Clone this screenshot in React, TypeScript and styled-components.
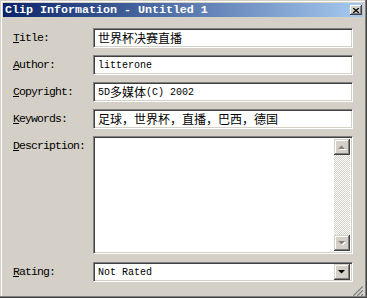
import React from 'react';
import styled, { createGlobalStyle } from 'styled-components';

const GlobalStyle = createGlobalStyle`
  html, body {
    margin: 0;
    padding: 0;
    background: #d4d0c8;
  }
`;

const MONO = `"Liberation Mono", "DejaVu Sans Mono", monospace`;
const CJK = `"Noto Sans CJK SC", "Liberation Sans", sans-serif`;

const Window = styled.div`
  width: 367px;
  height: 298px;
  box-sizing: border-box;
  padding: 3px 4px 2px 3px;
  background: #d4d0c8;
  display: flex;
  flex-direction: column;
  box-shadow: inset -1px -1px #404040, inset -2px -2px #808080, inset 1px 1px #d4d0c8, inset 2px 2px #ffffff;
`;

const TitleBar = styled.div`
  height: 14px;
  display: flex;
  align-items: center;
  justify-content: space-between;
  padding: 0 1px 0 2px;
  background: linear-gradient(90deg, #0a246a 0%, #a6caf0 100%);
`;

const TitleText = styled.span`
  font-family: ${MONO};
  font-weight: bold;
  font-size: 11.67px;
  color: #ffffff;
  white-space: pre;
  line-height: 14px;
`;

const CloseButton = styled.div`
  width: 12px;
  height: 10px;
  box-sizing: border-box;
  background: #d4d0c8;
  box-shadow: inset -1px -1px #404040, inset 1px 1px #ffffff, inset -2px -2px #808080;
  display: flex;
  align-items: center;
  justify-content: center;
`;

const Form = styled.div`
  display: grid;
  grid-template-columns: 80px 260px;
  row-gap: 7px;
  margin: 11px 0 0 10px;
`;

const Label = styled.div`
  font-family: ${MONO};
  font-size: 11.5px;
  letter-spacing: -0.9px;
  color: #000;
  line-height: 20px;
  white-space: pre;
`;

const Key = styled.span`
  text-decoration: underline;
  text-underline-offset: 1px;
`;

const sunken = `
  box-sizing: border-box;
  border-top: 1px solid #808080;
  border-left: 1px solid #808080;
  border-bottom: 1px solid #ffffff;
  border-right: 1px solid #ffffff;
  box-shadow: inset 1px 1px #404040, inset -1px -1px #d4d0c8;
  background: #ffffff;
`;

const Field = styled.div<{ $h?: number }>`
  ${sunken}
  height: ${p => p.$h ?? 20}px;
  display: flex;
  align-items: center;
  padding: 0 2px 0 4px;
  font-family: ${MONO};
  font-size: 10px;
  color: #000;
  white-space: pre;
  overflow: hidden;
`;

const Cjk = styled.span`
  font-family: ${CJK};
  font-size: 12px;
  line-height: 14px;
`;

const TextArea = styled.div`
  ${sunken}
  height: 118px;
  display: flex;
  padding: 2px 2px 2px 2px;
`;

const AreaBody = styled.div`
  flex: 1;
`;

const ScrollBar = styled.div`
  width: 16px;
  display: flex;
  flex-direction: column;
`;

const Track = styled.div`
  flex: 1;
  background-image: conic-gradient(#ffffff 25%, #d4d0c8 0 50%, #ffffff 0 75%, #d4d0c8 0);
  background-size: 2px 2px;
`;

const RaisedButton = styled.div`
  width: 16px;
  height: 16px;
  box-sizing: border-box;
  background: #d4d0c8;
  box-shadow: inset -1px -1px #404040, inset 1px 1px #d4d0c8, inset -2px -2px #808080, inset 2px 2px #ffffff;
  display: flex;
  align-items: center;
  justify-content: center;
`;

const Select = styled(Field)`
  padding-right: 2px;
  margin-top: 1px;
`;

const SelectText = styled.span`
  flex: 1;
`;

const Footer = styled.div`
  margin-top: auto;
  display: flex;
  justify-content: flex-end;
  padding-right: 0;
`;

const Arrow = ({ up, disabled }: { up?: boolean; disabled?: boolean }) => {
  const pts = up ? '0,4 7,4 3.5,0.5' : '0,0 7,0 3.5,3.5';
  return (
    <svg width="8" height="5" viewBox="0 0 8 5" style={{ overflow: 'visible' }}>
      {disabled && <polygon points={pts} fill="#ffffff" transform="translate(1,1)" />}
      <polygon points={pts} fill={disabled ? '#808080' : '#000000'} />
    </svg>
  );
};

const Grip = () => (
  <svg width="12" height="12" viewBox="0 0 12 12">
    {[0, 4, 8].map(o => (
      <g key={o}>
        <line x1={o + 1} y1="12" x2="12" y2={o + 1} stroke="#ffffff" strokeWidth="1" />
        <line x1={o + 2} y1="12" x2="12" y2={o + 2} stroke="#808080" strokeWidth="1.4" />
      </g>
    ))}
  </svg>
);

const Mixed = ({ text }: { text: string }) => {
  const parts = text.split(/([\u3000-\u9fff\uff00-\uffef]+)/).filter(Boolean);
  return (
    <>
      {parts.map((p, i) =>
        /[\u3000-\u9fff\uff00-\uffef]/.test(p) ? <Cjk key={i}>{p}</Cjk> : <span key={i}>{p}</span>
      )}
    </>
  );
};

const rows = [
  { key: 'T', rest: 'itle:', value: '世界杯决赛直播' },
  { key: 'A', rest: 'uthor:', value: 'litterone' },
  { key: 'C', rest: 'opyright:', value: '5D多媒体(C) 2002' },
  { key: 'K', rest: 'eywords:', value: '足球，世界杯，直播，巴西，德国' },
];

export default function App() {
  return (
    <>
      <GlobalStyle />
      <Window>
        <TitleBar>
          <TitleText>Clip Information - Untitled 1</TitleText>
          <CloseButton>
            <svg width="6" height="5" viewBox="0 0 6 5">
              <path d="M0 0 L6 5 M6 0 L0 5" stroke="#000" strokeWidth="1.3" />
            </svg>
          </CloseButton>
        </TitleBar>
        <Form>
          {rows.map(r => (
            <React.Fragment key={r.key}>
              <Label>
                <Key>{r.key}</Key>
                {r.rest}
              </Label>
              <Field>
                <Mixed text={r.value} />
              </Field>
            </React.Fragment>
          ))}
          <Label>
            <Key>D</Key>escription:
          </Label>
          <TextArea>
            <AreaBody />
            <ScrollBar>
              <RaisedButton>
                <Arrow up disabled />
              </RaisedButton>
              <Track />
              <RaisedButton>
                <Arrow disabled />
              </RaisedButton>
            </ScrollBar>
          </TextArea>
          <Label style={{ marginTop: 1 }}>
            <Key>R</Key>ating:
          </Label>
          <Select>
            <SelectText>Not Rated</SelectText>
            <RaisedButton>
              <Arrow />
            </RaisedButton>
          </Select>
        </Form>
        <Footer>
          <Grip />
        </Footer>
      </Window>
    </>
  );
}
